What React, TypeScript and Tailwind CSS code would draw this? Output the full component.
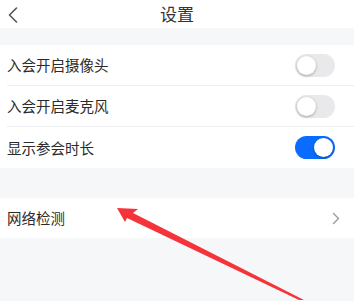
import { useState } from "react";

function Toggle({ on }: { on: boolean }) {
  return (
    <div
      className={`flex h-[23px] w-[40px] items-center rounded-full p-[2px] ${
        on ? "justify-end bg-[#0a6cff]" : "justify-start bg-[#e9e9eb]"
      }`}
    >
      <div className="h-[19px] w-[19px] rounded-full bg-white shadow-[0_1px_3px_rgba(0,0,0,0.3)]" />
    </div>
  );
}

function Row({ label, on, last }: { label: string; on: boolean; last?: boolean }) {
  return (
    <div className="pl-[7px]">
      <div
        className={`flex h-[41px] items-center justify-between pr-[19px] ${
          last ? "" : "border-b border-[#eeeff1]"
        }`}
      >
        <span className="text-[14.5px] text-[#2b2b2b]">{label}</span>
        <Toggle on={on} />
      </div>
    </div>
  );
}

export default function App() {
  const [rows] = useState([
    { label: "入会开启摄像头", on: false },
    { label: "入会开启麦克风", on: false },
    { label: "显示参会时长", on: true },
  ]);

  return (
    <main
      className="relative h-[301px] w-[354px] overflow-hidden bg-[#f6f7f9]"
      style={{ fontFamily: '"Noto Sans CJK SC", "Noto Sans", sans-serif' }}
    >
      {/* Header */}
      <header className="relative flex h-[28px] items-center justify-center bg-white">
        <svg
          className="absolute left-[8px] top-[7px]"
          width="10"
          height="16"
          viewBox="0 0 10 16"
          fill="none"
          stroke="#555"
          strokeWidth="1.6"
          strokeLinecap="round"
          strokeLinejoin="round"
        >
          <path d="M8.5 1 L1.5 8 L8.5 15" />
        </svg>
        <h1 className="text-[17px] text-[#333]">设置</h1>
      </header>

      <div className="h-[17px]" />

      <div className="bg-white">
        {rows.map((r, i) => (
          <Row key={r.label} label={r.label} on={r.on} last={i === rows.length - 1} />
        ))}
      </div>

      <div className="h-[30px]" />

      <div className="flex h-[40px] items-center justify-between bg-white pl-[7px] pr-[14px]">
        <span className="text-[14.5px] text-[#2b2b2b]">网络检测</span>
        <svg
          width="8"
          height="13"
          viewBox="0 0 8 13"
          fill="none"
          stroke="#999"
          strokeWidth="1.4"
          strokeLinecap="round"
          strokeLinejoin="round"
        >
          <path d="M1.5 1.5 L6.5 6.5 L1.5 11.5" />
        </svg>
      </div>

      {/* Red annotation arrow */}
      <svg className="absolute left-0 top-0" width="354" height="301" viewBox="0 0 354 301">
        <polygon
          points="117,208 138,209 133,213 304,300 299,300 127,218 125,222"
          fill="#f5333a"
        />
      </svg>
    </main>
  );
}
